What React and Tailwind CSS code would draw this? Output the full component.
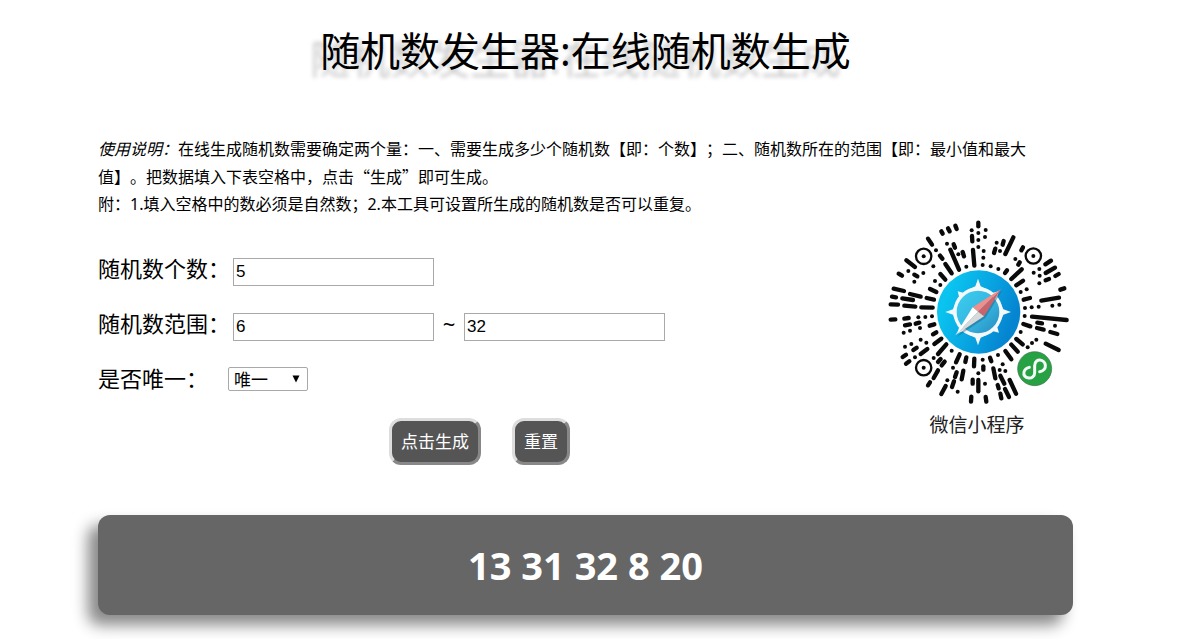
import React, { useState } from 'react';

// line segments of the mini program code: x1 y1 x2 y2
const STROKES = [
  // top left
  [187, 49, 191, 56], [207, 40, 212, 49], [229, 32, 233, 42], [147, 71, 159, 89], [82, 136, 108, 156],
  [224, 88, 228, 98], [251, 111, 255, 124], [183, 122, 190, 131], [214, 104, 240, 164], [199, 147, 218, 175],
  [59, 176, 69, 182], [106, 179, 115, 184], [184, 177, 199, 194], [282, 105, 286, 152], [279, 63, 280, 79],
  [44, 221, 75, 228], [93, 237, 125, 245], [153, 222, 172, 231], [39, 245, 51, 247], [70, 250, 102, 255],
  [143, 249, 165, 254], [35, 268, 57, 269], [76, 272, 109, 275], [127, 277, 161, 278],
  // top right
  [298, 23, 298, 34], [384, 166, 378, 174], [403, 67, 379, 117], [374, 78, 371, 89], [349, 101, 345, 114],
  [432, 97, 427, 106], [422, 142, 418, 149], [428, 163, 397, 192], [432, 197, 412, 211], [516, 137, 499, 148],
  [528, 158, 500, 174], [539, 177, 529, 183], [510, 192, 500, 196], [453, 249, 434, 254], [556, 220, 544, 224],
  [540, 248, 487, 257],
  // bottom left
  [35, 314, 49, 313], [76, 311, 89, 309], [78, 331, 93, 328], [110, 326, 121, 323], [152, 332, 166, 328],
  [162, 358, 172, 352], [166, 387, 187, 371], [202, 388, 177, 417], [103, 405, 113, 398], [125, 417, 145, 402],
  [71, 426, 81, 419], [81, 446, 91, 439], [185, 432, 177, 441], [197, 440, 188, 451], [242, 418, 231, 442],
  [177, 466, 164, 489], [153, 502, 147, 511], [200, 513, 187, 537], [225, 499, 219, 516], [233, 472, 228, 486],
  [253, 467, 248, 493], [262, 427, 259, 441], [286, 431, 285, 454], [281, 494, 281, 506], [277, 545, 276, 560],
  // bottom right
  [459, 305, 563, 315], [433, 327, 454, 334], [475, 323, 489, 325], [474, 339, 494, 344], [514, 351, 535, 357],
  [500, 386, 539, 405], [412, 372, 431, 388], [397, 389, 416, 410], [379, 408, 397, 433], [333, 428, 337, 439],
  [313, 454, 313, 464], [343, 460, 349, 490], [364, 482, 376, 506], [298, 495, 298, 529], [392, 495, 411, 536],
  [378, 522, 390, 546], [356, 510, 359, 520], [364, 536, 367, 550], [320, 546, 322, 560],
];

const DOTS = [
  [171, 106], [204, 86], [238, 118], [163, 154], [88, 168], [133, 174], [106, 200], [168, 198], [184, 210],
  [262, 155], [278, 46], [320, 45], [298, 54], [318, 66], [298, 75], [298, 96], [314, 108], [313, 128],
  [311, 150], [335, 154], [358, 162], [353, 83], [363, 108], [409, 132], [481, 162], [464, 173], [482, 182],
  [481, 205], [443, 223], [425, 231], [520, 272], [541, 269], [438, 279], [458, 277], [479, 275],
  [118, 307], [139, 306], [159, 304], [74, 353], [93, 347], [123, 339], [125, 374], [142, 383], [78, 395],
  [97, 387], [108, 427], [164, 429], [218, 407], [205, 496], [236, 530], [222, 458], [298, 475],
  [437, 303], [528, 332], [425, 351], [472, 374], [459, 384], [446, 397], [357, 420], [311, 434],
  [371, 448], [362, 465], [379, 468], [318, 506],
];

const EYES = [[134, 124], [463, 123], [134, 458]];

function MiniProgramCode() {
  return (
    <svg viewBox="24 12 552 564" className="w-[184px] h-[188px]" role="img" aria-label="微信小程序">
      <defs>
        <linearGradient id="disc" x1="0" y1="0.3" x2="1" y2="0.7">
          <stop offset="0.1" stopColor="#0ac4ef" />
          <stop offset="0.5" stopColor="#08a5e2" />
          <stop offset="0.9" stopColor="#0584d0" />
        </linearGradient>
        <linearGradient id="glass" x1="0" y1="0" x2="1" y2="1">
          <stop offset="0" stopColor="#3bd0f2" />
          <stop offset="0.5" stopColor="#36b9e2" />
          <stop offset="1" stopColor="#2688bd" />
        </linearGradient>
      </defs>
      <g stroke="#0a0a0a" strokeWidth="13" strokeLinecap="round">
        {STROKES.map(([x1, y1, x2, y2], i) => (
          <line key={i} x1={x1} y1={y1} x2={x2} y2={y2} />
        ))}
      </g>
      <g fill="#0a0a0a">
        {DOTS.map(([x, y], i) => (
          <circle key={i} cx={x} cy={y} r="6" />
        ))}
      </g>
      {EYES.map(([x, y], i) => (
        <g key={i}>
          <circle cx={x} cy={y} r="23" fill="none" stroke="#0a0a0a" strokeWidth="7" />
          <circle cx={x} cy={y} r="6" fill="#0a0a0a" />
        </g>
      ))}

      {/* compass */}
      <circle cx="299" cy="291" r="125" fill="url(#disc)" />
      <g fill="#f4f8fa">
        <path d="M297 191 L305 214 L323 222 H271 L289 214 Z" />
        <path d="M297 391 L305 368 L323 360 H271 L289 368 Z" />
        <path d="M199 291 L222 283 L230 265 V317 L222 299 Z" />
        <path d="M396 291 L373 283 L365 265 V317 L373 299 Z" />
        <path d="M236 229 L258 235 L242 252 Z" />
        <path d="M359 229 L337 235 L353 252 Z" />
        <path d="M236 353 L258 347 L242 330 Z" />
        <path d="M360 353 L337 347 L353 330 Z" />
      </g>
      <circle cx="297" cy="291" r="69" fill="url(#glass)" stroke="#f4f8fa" strokeWidth="10" />
      <path d="M233 366 L319 309 L370 226 Z" fill="#1d4f74" opacity="0.4" />
      <path d="M367 221 L281 277 L297 290 Z" fill="#ef8f8c" />
      <path d="M367 221 L297 290 L315 304 Z" fill="#c9646a" />
      <path d="M229 361 L281 277 L297 290 Z" fill="#ffffff" />
      <path d="M229 361 L297 290 L315 304 Z" fill="#d9d9da" />

      {/* mini program badge */}
      <circle cx="467" cy="461" r="51" fill="#26a245" stroke="#3d6b48" strokeWidth="2" />
      <path
        d="M482 470 C494 468 500 460 499 450 C497 437 482 431 473 438 C468 442 467 446 467 452 V473 C467 484 458 490 449 489 C438 488 433 480 435 471 C437 463 443 459 451 457"
        fill="none"
        stroke="#f5fbf6"
        strokeWidth="9"
        strokeLinecap="round"
      />
    </svg>
  );
}

const inputClass =
  "w-[201px] h-7 px-[2px] border border-[#a9a9a9] bg-white text-[17px] font-['Liberation_Sans',sans-serif] outline-none";
const buttonClass =
  'h-[47px] px-[9px] rounded-xl border-[3px] border-t-[#ddd] border-l-[#ddd] border-r-[#888] border-b-[#888] bg-[#555] text-[17px] text-white cursor-pointer';

export default function App() {
  const [count, setCount] = useState('5');
  const [min, setMin] = useState('6');
  const [max, setMax] = useState('32');
  const [unique, setUnique] = useState('yes');
  const [result, setResult] = useState([13, 31, 32, 8, 20]);

  const generate = (e) => {
    e.preventDefault();
    const low = Number(min);
    const size = Number(max) - low + 1;
    const total = Number(count);
    if (size < 1 || total < 1 || (unique === 'yes' && total > size)) return;

    const numbers = [];
    while (numbers.length < total) {
      const n = low + Math.floor(Math.random() * size);
      if (unique === 'yes' && numbers.includes(n)) continue;
      numbers.push(n);
    }
    setResult(numbers);
  };

  const reset = () => {
    setCount('');
    setMin('');
    setMax('');
    setResult([]);
  };

  return (
    <main className="pl-[98px] pr-[122px] pt-[21px] pb-6 bg-white text-black font-['Noto_Sans','Noto_Sans_CJK_SC',sans-serif] [text-spacing-trim:space-all]">
      <h1 className="text-center text-[40px] leading-[60px] [text-shadow:-10px_8px_4px_#ccc]">
        随机数发生器:在线随机数生成
      </h1>

      <p className="mt-[55px] text-base leading-[27px]">
        <em>使用说明：</em>在线生成随机数需要确定两个量：一、需要生成多少个随机数【即：个数】；二、随机数所在的范围【即：最小值和最大值】。把数据填入下表空格中，点击<span className="font-['Noto_Sans_CJK_SC',sans-serif]">“生成”</span>即可生成。
        <br />
        附：1.填入空格中的数必须是自然数；2.本工具可设置所生成的随机数是否可以重复。
      </p>

      <div className="flex justify-between">
        <form className="flex-1 pt-[26px]" onSubmit={generate}>
          <div className="flex items-center h-[55px] text-[22px]">
            <label htmlFor="count" className="w-[135px] pb-[6px]">随机数个数：</label>
            <input id="count" className={inputClass} value={count} onChange={(e) => setCount(e.target.value)} />
          </div>
          <div className="flex items-center h-[55px] text-[22px]">
            <label htmlFor="min" className="w-[135px] pb-[6px]">随机数范围：</label>
            <input id="min" className={inputClass} value={min} onChange={(e) => setMin(e.target.value)} />
            <span className="w-[30px] pb-[6px] text-center">~</span>
            <input aria-label="最大值" className={inputClass} value={max} onChange={(e) => setMax(e.target.value)} />
          </div>
          <div className="flex items-center h-[49px] text-[22px]">
            <label htmlFor="unique" className="w-[130px]">是否唯一：</label>
            <div className="relative">
              <select
                id="unique"
                className="block appearance-none w-20 h-6 pl-[5px] rounded-xs border border-[#a9a9a9] bg-white text-[17px] leading-6 outline-none"
                value={unique}
                onChange={(e) => setUnique(e.target.value)}
              >
                <option value="yes">唯一</option>
                <option value="no">不唯一</option>
              </select>
              <svg viewBox="0 0 8 8" className="absolute right-2 top-2 w-2 h-2 pointer-events-none">
                <path d="M0.5 0.5 H7.5 L4 7.5 Z" />
              </svg>
            </div>
          </div>
          <div className="flex gap-[31px] pl-[291px] mt-[15px]">
            <button type="submit" className={buttonClass}>点击生成</button>
            <button type="button" className={buttonClass} onClick={reset}>重置</button>
          </div>
        </form>

        <figure className="flex flex-col items-center pt-px pr-[2px]">
          <MiniProgramCode />
          <figcaption className="mt-1 pr-1 text-[19px] leading-7 text-[#222]">微信小程序</figcaption>
        </figure>
      </div>

      <output className="flex items-center justify-center mt-[50px] min-h-[100px] rounded-xl bg-[#666] text-white text-[38px] font-bold shadow-[-10px_10px_15px_#888]">
        {result.join(' ')}
      </output>
    </main>
  );
}
